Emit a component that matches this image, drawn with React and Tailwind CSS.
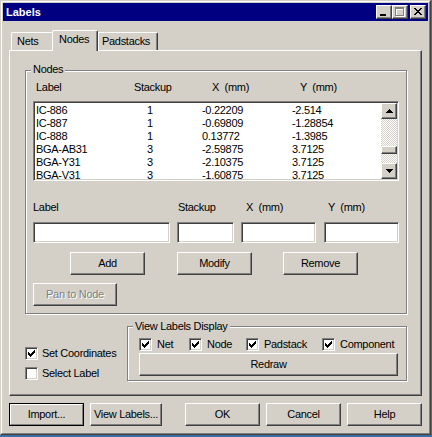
import React from "react";

const raised =
  "border border-t-white border-l-white border-r-[#404040] border-b-[#404040] shadow-[inset_-1px_-1px_0_#808080]";
const sunken =
  "border border-t-[#808080] border-l-[#808080] border-r-white border-b-white shadow-[inset_1px_1px_0_#404040,inset_-1px_-1px_0_#d4d0c8]";
const etched = "border border-[#808080] shadow-[inset_1px_1px_0_#fff,1px_1px_0_#fff]";

function Btn({ className = "", children, disabled }) {
  return (
    <div
      className={`${raised} bg-[#d4d0c8] flex items-center justify-center h-[23px] shrink-0 ${
        disabled ? "text-[#808080] [text-shadow:1px_1px_0_#fff]" : ""
      } ${className}`}
    >
      {children}
    </div>
  );
}

function Check({ checked }) {
  return (
    <div className={`${sunken} w-[13px] h-[13px] bg-white flex items-center justify-center shrink-0`}>
      {checked && (
        <svg width="7" height="7" shapeRendering="crispEdges">
          <path
            d="M0 2h1v3h-1z M1 3h1v3h-1z M2 4h1v3h-1z M3 3h1v3h-1z M4 2h1v3h-1z M5 1h1v3h-1z M6 0h1v3h-1z"
            fill="#000"
          />
        </svg>
      )}
    </div>
  );
}

function CheckItem({ checked, label, className = "", gap = "ml-[5px]" }) {
  return (
    <div className={`flex items-center h-[13px] ${className}`}>
      <Check checked={checked} />
      <span className={`${gap} whitespace-nowrap`}>{label}</span>
    </div>
  );
}

function TitleBtn({ children, className = "" }) {
  return (
    <div className={`${raised} bg-[#d4d0c8] w-[16px] h-[14px] shrink-0 ${className}`}>
      <svg width="14" height="12" shapeRendering="crispEdges" className="block">
        {children}
      </svg>
    </div>
  );
}

function ScrollBtn({ up }) {
  return (
    <div className={`${raised} bg-[#d4d0c8] w-[16px] h-[16px] flex items-center justify-center shrink-0`}>
      <svg width="7" height="4" shapeRendering="crispEdges">
        {up ? (
          <path d="M3 0h1v1h-1z M2 1h3v1h-3z M1 2h5v1h-5z M0 3h7v1h-7z" fill="#000" />
        ) : (
          <path d="M0 0h7v1h-7z M1 1h5v1h-5z M2 2h3v1h-3z M3 3h1v1h-1z" fill="#000" />
        )}
      </svg>
    </div>
  );
}

const rows = [
  ["IC-886", "1", "-0.22209", "-2.514"],
  ["IC-887", "1", "-0.69809", "-1.28854"],
  ["IC-888", "1", "0.13772", "-1.3985"],
  ["BGA-AB31", "3", "-2.59875", "3.7125"],
  ["BGA-Y31", "3", "-2.10375", "3.7125"],
  ["BGA-V31", "3", "-1.60875", "3.7125"],
];

export default function App() {
  return (
    <div className="w-[432px] h-[437px] bg-[#3a6ea5] font-['Liberation_Sans',Arial,sans-serif] text-[11px] leading-[13px] tracking-[-0.3px] text-black">
      <div className="w-[431px] h-[435px] border border-t-[#d4d0c8] border-l-[#d4d0c8] border-r-[#404040] border-b-[#404040] bg-[#d4d0c8]">
        <div className="h-full border border-t-white border-l-white border-r-[#808080] border-b-[#808080] p-px flex flex-col">
          {/* Title bar */}
          <div className="h-[18px] bg-[#000080] flex items-center pl-[3px] pr-[2px] shrink-0">
            <span className="text-white font-bold flex-1 tracking-[0px]">Labels</span>
            <TitleBtn>
              <rect x="3" y="8" width="6" height="2" fill="#000" />
            </TitleBtn>
            <TitleBtn>
              <g fill="#fff">
                <rect x="3" y="2" width="9" height="2" />
                <rect x="3" y="2" width="1" height="9" />
                <rect x="11" y="2" width="1" height="9" />
                <rect x="3" y="10" width="9" height="1" />
              </g>
              <g fill="#808080">
                <rect x="2" y="1" width="9" height="2" />
                <rect x="2" y="1" width="1" height="9" />
                <rect x="10" y="1" width="1" height="9" />
                <rect x="2" y="9" width="9" height="1" />
              </g>
            </TitleBtn>
            <TitleBtn className="ml-[2px]">
              <path
                d="M3 2h2v1h-2z M9 2h2v1h-2z M4 3h2v1h-2z M8 3h2v1h-2z M5 4h4v1h-4z M6 5h2v1h-2z M5 6h4v1h-4z M4 7h2v1h-2z M8 7h2v1h-2z M3 8h2v1h-2z M9 8h2v1h-2z"
                fill="#000"
              />
            </TitleBtn>
          </div>

          {/* Tabs */}
          <div className="flex items-end h-[20px] mt-[9px] ml-[6px] relative z-10 shrink-0">
            <div className="ml-[2px] w-[41px] h-[18px] border-t border-l border-white rounded-tl-[2px] pl-[5px] pt-[2px]">
              Nets
            </div>
            <div className="w-[46px] h-[21px] -mb-px bg-[#d4d0c8] border-t border-l border-r border-t-white border-l-white border-r-[#404040] shadow-[inset_-1px_0_0_#808080] rounded-t-[2px] pl-[6px] pt-[2px]">
              Nodes
            </div>
            <div className="w-[60px] h-[18px] border-t border-l border-r border-t-white border-l-white border-r-[#404040] shadow-[inset_-1px_0_0_#808080] rounded-tr-[2px] pl-[3px] pt-[2px]">
              Padstacks
            </div>
          </div>

          {/* Tab panel */}
          <div className={`ml-[6px] w-[413px] h-[346px] shrink-0 ${raised}`}>
            {/* Nodes group */}
            <div className={`relative ml-[15px] mt-[19px] w-[382px] h-[244px] ${etched}`}>
              <span className="absolute left-[5px] -top-[8px] px-[2px] bg-[#d4d0c8]">Nodes</span>

              <div className="flex h-[13px] mt-[10px] pl-[10px] whitespace-pre">
                <span className="w-[98px]">Label</span>
                <span className="w-[78px]">Stackup</span>
                <span className="w-[88px]">X  (mm)</span>
                <span>Y  (mm)</span>
              </div>

              {/* List */}
              <div className={`ml-[7px] mt-[7px] w-[366px] h-[80px] bg-white ${sunken}`}>
                <div className="m-px h-[76px] flex">
                  <div className="flex-1 pt-px">
                    {rows.map((r) => (
                      <div key={r[0]} className="flex h-[13px] pl-px whitespace-nowrap">
                        <span className="w-[100px]">{r[0]}</span>
                        <span className="w-[28px] text-center">{r[1]}</span>
                        <span className="w-[38px]" />
                        <span className="w-[90px]">{r[2]}</span>
                        <span>{r[3]}</span>
                      </div>
                    ))}
                  </div>
                  <div className="w-[16px] h-[76px] flex flex-col">
                    <ScrollBtn up />
                    <div className="h-[44px] bg-[image:repeating-conic-gradient(#fff_0%_25%,#d4d0c8_0%_50%)] bg-[length:2px_2px] pt-[27px]">
                      <div className={`${raised} bg-[#d4d0c8] w-[16px] h-[8px]`} />
                    </div>
                    <ScrollBtn />
                  </div>
                </div>
              </div>

              {/* Edit fields */}
              <div className="ml-[7px] mt-[20px] flex h-[13px] whitespace-pre">
                <span className="w-[137px]">Label</span>
                <span className="ml-[7px] w-[57px] pl-px">Stackup</span>
                <span className="ml-[7px] w-[75px] pl-[5px]">X  (mm)</span>
                <span className="ml-[8px] w-[75px] pl-[4px]">Y  (mm)</span>
              </div>
              <div className="ml-[7px] mt-[8px] flex">
                <div className={`w-[137px] h-[21px] bg-white ${sunken}`} />
                <div className={`ml-[7px] w-[57px] h-[21px] bg-white ${sunken}`} />
                <div className={`ml-[7px] w-[75px] h-[21px] bg-white ${sunken}`} />
                <div className={`ml-[8px] w-[75px] h-[21px] bg-white ${sunken}`} />
              </div>
              <div className="ml-[7px] mt-[9px] flex">
                <Btn className="ml-[37px] w-[75px]">Add</Btn>
                <Btn className="ml-[32px] w-[75px]">Modify</Btn>
                <Btn className="ml-[31px] w-[75px]">Remove</Btn>
              </div>
              <div className="ml-[7px] mt-[8px] flex">
                <Btn disabled className="w-[84px]">
                  Pan to Node
                </Btn>
              </div>
            </div>

            {/* Lower row */}
            <div className="ml-[15px] mt-[12px] flex">
              <div className="w-[102px] pt-[21px] flex flex-col gap-[7px]">
                <CheckItem checked label="Set Coordinates" gap="ml-[4px]" />
                <CheckItem label="Select Label" gap="ml-[4px]" />
              </div>
              <div className={`relative w-[280px] h-[55px] ${etched}`}>
                <span className="absolute left-[5px] -top-[7px] px-[2px] bg-[#d4d0c8] whitespace-nowrap">
                  View Labels Display
                </span>
                <div className="mt-[11px] pl-[11px] flex">
                  <CheckItem checked label="Net" className="w-[50px]" />
                  <CheckItem checked label="Node" className="w-[57px]" />
                  <CheckItem checked label="Padstack" className="w-[76px]" />
                  <CheckItem checked label="Component" />
                </div>
                <Btn className="ml-[11px] mt-[2px] w-[259px]">Redraw</Btn>
              </div>
            </div>
          </div>

          {/* Bottom buttons */}
          <div className="ml-[6px] mt-[7px] flex">
            <div className="w-[75px] h-[23px] border border-black shrink-0">
              <div className="h-full border border-t-white border-l-white border-r-[#808080] border-b-[#808080] flex items-center justify-center">
                Import...
              </div>
            </div>
            <Btn className="ml-[6px] w-[72px]">View Labels...</Btn>
            <Btn className="ml-[23px] w-[75px]">OK</Btn>
            <Btn className="ml-[6px] w-[75px]">Cancel</Btn>
            <Btn className="ml-[6px] w-[75px]">Help</Btn>
          </div>
        </div>
      </div>
    </div>
  );
}
